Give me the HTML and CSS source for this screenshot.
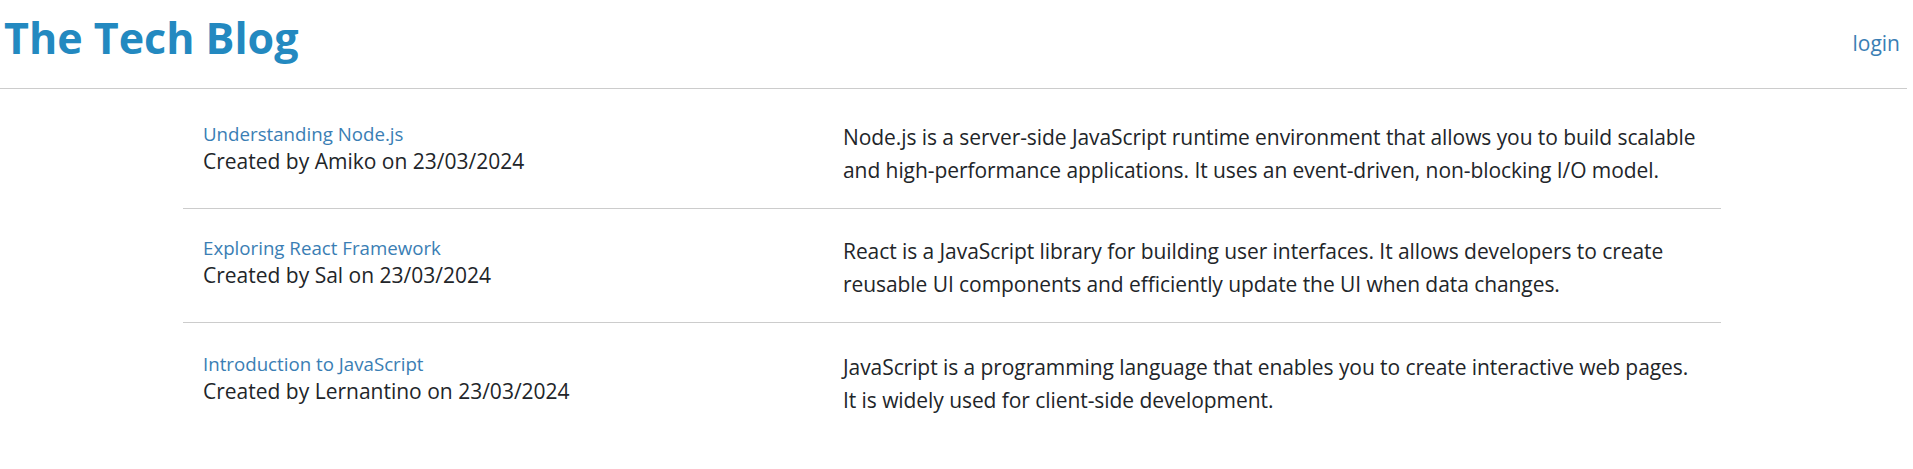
FILE: index.html
```html
<!DOCTYPE html>
<html lang="en">
<head>
<meta charset="utf-8">
<title>The Tech Blog</title>
<link rel="stylesheet" href="styles.css">
</head>
<body>
<header class="site-header">
  <h1 class="brand">The Tech Blog</h1>
  <nav class="nav"><a class="nav-link" href="#">login</a></nav>
</header>
<main class="posts">
  <article class="post">
    <div class="post-meta">
      <a class="post-title" href="#">Understanding Node.js</a>
      <div class="post-author">Created by Amiko on 23/03/2024</div>
    </div>
    <p class="post-body">Node.js is a server-side JavaScript runtime environment that allows you to build scalable<br>and high-performance applications. It uses an event-driven, non-blocking I/O model.</p>
  </article>
  <article class="post">
    <div class="post-meta">
      <a class="post-title" href="#">Exploring React Framework</a>
      <div class="post-author">Created by Sal on 23/03/2024</div>
    </div>
    <p class="post-body">React is a JavaScript library for building user interfaces. It allows developers to create<br>reusable UI components and efficiently update the UI when data changes.</p>
  </article>
  <article class="post">
    <div class="post-meta">
      <a class="post-title" href="#">Introduction to JavaScript</a>
      <div class="post-author">Created by Lernantino on 23/03/2024</div>
    </div>
    <p class="post-body">JavaScript is a programming language that enables you to create interactive web pages.<br>It is widely used for client-side development.</p>
  </article>
</main>
</body>
</html>
```
FILE: styles.css
```css
html, body {
  margin: 0;
  padding: 0;
  background: #ffffff;
}

body {
  font-family: "Open Sans", "Noto Sans", "Liberation Sans", sans-serif;
  color: #222529;
  font-size: 21px;
}

.site-header {
  display: flex;
  justify-content: space-between;
  align-items: flex-start;
  padding: 12px 7px 24px 4px;
  margin-right: 6px;
  border-bottom: 1px solid #cccccc;
}

.brand {
  margin: 0;
  font-size: 43px;
  line-height: 52px;
  font-weight: 700;
  color: #2389c0;
}

.nav {
  padding-top: 17px;
}

.nav-link {
  display: block;
  font-size: 21px;
  line-height: 28px;
  color: #3a7eb4;
  text-decoration: none;
}

.posts {
  width: 1538px;
  margin: 6px 0 0 183px;
}

.post {
  display: grid;
  grid-template-columns: 640px 1fr;
  padding: 26px 0 21px;
  border-bottom: 1px solid #cccccc;
}

.post:last-child {
  border-bottom: none;
  padding-top: 28px;
}

.post-meta {
  padding: 0 20px;
}

.post-title {
  display: block;
  font-size: 18.7px;
  line-height: 26px;
  color: #3a7eb4;
  text-decoration: none;
}

.post-author {
  font-size: 21px;
  line-height: 28px;
}

.post-body {
  margin: 0;
  padding: 0 20px;
  font-size: 21px;
  line-height: 33px;
  letter-spacing: -0.07px;
  white-space: nowrap;
}
```
